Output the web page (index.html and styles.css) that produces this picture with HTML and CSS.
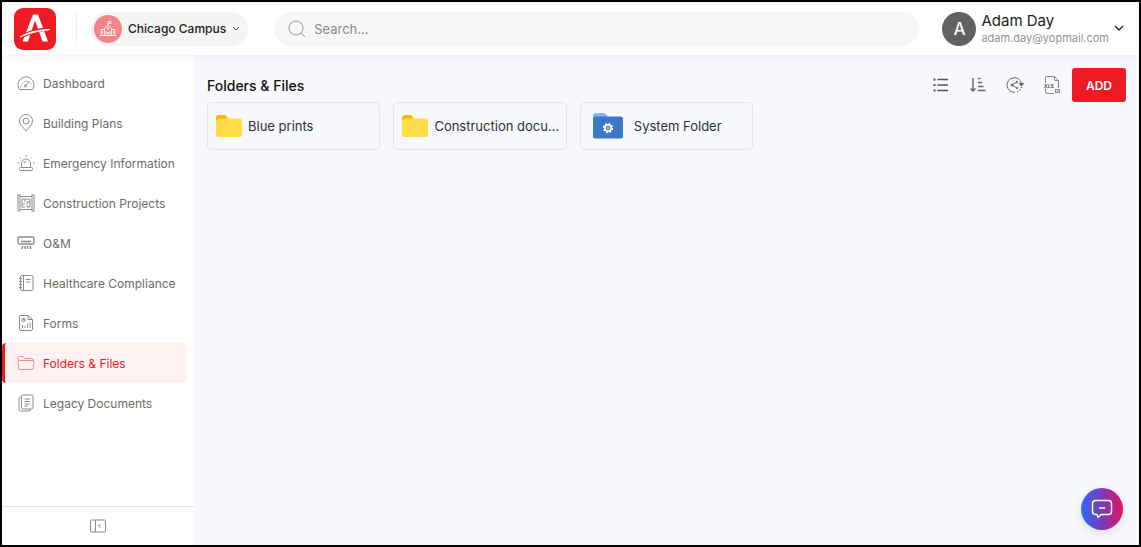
FILE: index.html
```html
<!DOCTYPE html>
<html lang="en">

<head>
    <meta charset="UTF-8">
    <meta name="viewport" content="width=device-width, initial-scale=1.0">
    <title>Folders &amp; Files</title>
    <link rel="stylesheet" href="styles.css">
</head>

<body>
    <header class="topbar">
        <a href="#" class="logo" aria-label="Home">
            <svg width="42" height="42" viewBox="0 0 42 42">
                <rect width="42" height="42" rx="9" fill="#ed1c24"/>
                <path d="M19 6.500h5L34 33.500h-5.500L21 12.500 14 33.500H8.500z" fill="#fff"/>
                <path d="M5.500 29.500C12 24 22 21 36.500 20.500 24 23 16 25 9 28.500z" fill="#fff" stroke="#ed1c24" stroke-width="2"/>
                <path d="M6 29C13 24.500 23 22 36 21.500 24 23 16 25 6 29z" fill="#fff" stroke="#fff"/>
            </svg>
        </a>

        <div class="campus">
            <button type="button" class="campus-button">
                <span class="campus-icon">
                    <svg width="18" height="18" viewBox="0 0 18 18" fill="none" stroke="#fff" stroke-width="0.800">
                        <path d="M9 5V1.500h3v2H9M5.500 15.500V8L9 5l3.500 3v7.500M5.500 9.500H2v6h14v-6h-3.500M1 15.500h16M8 15.500v-3h2v3M3.500 11v3M14.500 11v3M7 11v3M11 11v3"/>
                        <circle cx="9" cy="8.500" r="1"/>
                    </svg>
                </span>
                Chicago Campus
                <svg width="8" height="6" viewBox="0 0 8 6" fill="none" stroke="#444"><path d="M1 1l3 3 3-3"/></svg>
            </button>
        </div>

        <label class="search">
            <svg width="18" height="18" viewBox="0 0 18 18" fill="none" stroke="#999">
                <circle cx="8" cy="8" r="7"/>
                <path d="M13 13l4 4"/>
            </svg>
            <input type="text" placeholder="Search..." aria-label="Search">
        </label>

        <button type="button" class="user">
            <span class="avatar">A</span>
            <span class="user-details">
                <span class="user-name">Adam Day</span>
                <span class="user-email">adam.day@yopmail.com</span>
            </span>
            <svg width="10" height="7" viewBox="0 0 10 7" fill="none" stroke="#222" stroke-width="1.300"><path d="M1 1l4 4 4-4"/></svg>
        </button>
    </header>

    <div class="page">
        <aside class="sidebar">
            <nav class="menu">
                <a href="#" class="menu-item">
                    <svg viewBox="0 0 18 18">
                        <path d="M2.500 15.500A8 8 0 1 1 15.500 15.500z"/>
                        <path d="M4 12.500a5.500 5.500 0 0 1 10.500-2" stroke-dasharray="1.500 1"/>
                        <path d="M8.500 12L12 7.500"/>
                        <circle cx="8.500" cy="12" r="1"/>
                    </svg>
                    Dashboard
                </a>
                <a href="#" class="menu-item">
                    <svg viewBox="0 0 18 18">
                        <path d="M9 17C7 14 2.500 11 2.500 7a6.500 6.500 0 0 1 13 0c0 4-4.500 7-6.500 10z"/>
                        <circle cx="9" cy="7" r="3"/>
                    </svg>
                    Building Plans
                </a>
                <a href="#" class="menu-item">
                    <svg viewBox="0 0 18 18">
                        <path d="M4.500 13V9.500a4.500 4.500 0 0 1 9 0V13M7 9.500a2 2 0 0 1 2-2"/>
                        <rect x="2.500" y="13.500" width="13" height="3" rx="1"/>
                        <path d="M9 1v1.500M3 3.500l1 1M15 3.500l-1 1M0.500 9H2M16 9h1.500"/>
                    </svg>
                    Emergency Information
                </a>
                <a href="#" class="menu-item">
                    <svg viewBox="0 0 18 18">
                        <rect x="1" y="1" width="2" height="16"/>
                        <rect x="15" y="1" width="2" height="16"/>
                        <path d="M3 2.500h12M3 15.500h12M5 5h8v8h-3v-2M8 13H5V5M8 5v3M5 10h3M10 8h3M10 8v2"/>
                    </svg>
                    Construction Projects
                </a>
                <a href="#" class="menu-item">
                    <svg viewBox="0 0 18 18" class="thick">
                        <rect x="1" y="3" width="16" height="7" rx="1.500"/>
                        <path d="M4 7.500h10M6 12l-1.500 3M8 12v3M10.500 12v3M13 12l1 3"/>
                    </svg>
                    O&amp;M
                </a>
                <a href="#" class="menu-item">
                    <svg viewBox="0 0 18 18">
                        <rect x="3.500" y="1.500" width="12.500" height="15" rx="1.500"/>
                        <path d="M6.500 1.500v15M2 4.500h3M2 7.500h3M2 10.500h3M2 13.500h3M9 5.500h4.500M9 8h4.500"/>
                    </svg>
                    Healthcare Compliance
                </a>
                <a href="#" class="menu-item">
                    <svg viewBox="0 0 18 18">
                        <path d="M3.500 1.500H11l4.500 4V15q0 1.500-1.500 1.500H4Q2.500 16.500 2.500 15V3q0-1.500 1.500-1.500zM11 1.500v4h4.500"/>
                        <circle cx="6.500" cy="6" r="1.700"/>
                        <path d="M6.500 4.300V6h1.700M5.500 14v-3M8 14v-2M10.500 14V9.500M13 14V8.500"/>
                    </svg>
                    Forms
                </a>
                <a href="#" class="menu-item active" aria-current="page">
                    <svg viewBox="0 0 18 18">
                        <path d="M1 6.500V4Q1 2.500 2.500 2.500H6L8 4.500h6.500Q16 4.500 16 6.500"/>
                        <path d="M2 6.500h14q1 0 1 1l-.5 6.500q0 1.500-1.500 1.500H3q-1.500 0-1.500-1.500L1 7.500q0-1 1-1z"/>
                    </svg>
                    Folders &amp; Files
                </a>
                <a href="#" class="menu-item">
                    <svg viewBox="0 0 18 18">
                        <rect x="4.500" y="1" width="11.500" height="14" rx="1.500"/>
                        <path d="M4.500 3H3.500Q2 3 2 4.500V15.500Q2 17 3.500 17H12q1.500 0 1.500-2M7.500 5H13M7.500 7.500H13M7.500 10H13M7.500 12H11"/>
                    </svg>
                    Legacy Documents
                </a>
            </nav>
            <button type="button" class="collapse" aria-label="Collapse menu">
                <svg width="16" height="14" viewBox="0 0 16 14" fill="none" stroke="#888">
                    <rect x="0.500" y="1" width="15" height="12" rx="1"/>
                    <path d="M5.500 1v12M10.500 5L8.500 7l2 2"/>
                </svg>
            </button>
        </aside>

        <main class="content">
            <div class="content-header">
                <h1>Folders &amp; Files</h1>
                <div class="tools">
                    <button type="button" class="tool" aria-label="List view">
                        <svg width="18" height="18" viewBox="0 0 18 18" fill="none" stroke="#555" stroke-width="1.300">
                            <path d="M5.500 3.500H16M5.500 9H16M5.500 14.500H16"/>
                            <path d="M1.500 3.500h2M1.500 9h2M1.500 14.500h2" stroke-width="2.200"/>
                        </svg>
                    </button>
                    <button type="button" class="tool" aria-label="Sort">
                        <svg width="18" height="18" viewBox="0 0 18 18" fill="none" stroke="#666" stroke-width="1.400">
                            <path d="M4 2v13M1.500 12.500L4 15l2.500-2.500M9 2.500h2.500M9 6.500h4M9 10.500h5.500M9 14.500h7.500"/>
                        </svg>
                    </button>
                    <button type="button" class="tool" aria-label="Share">
                        <svg width="18" height="18" viewBox="0 0 18 18" fill="none" stroke="#666">
                            <path d="M15.500 7.500A7.300 7.300 0 1 0 9 16.300"/>
                            <path d="M11 16l1-.3M13.500 14.500l1-1M15.500 12l.3-1" stroke-width="1.300"/>
                            <path d="M13.500 7.500h4L15.500 10z" fill="#555"/>
                            <path d="M11 6L6 9l5 3"/>
                            <circle cx="6" cy="9" r="1" fill="#666"/>
                            <circle cx="11" cy="6" r="0.700" fill="#666"/>
                            <circle cx="11" cy="12" r="0.700" fill="#666"/>
                        </svg>
                    </button>
                    <button type="button" class="tool" aria-label="Export XLS">
                        <svg width="18" height="18" viewBox="0 0 18 18" fill="none" stroke="#888">
                            <path d="M2.500 7V2Q2.500.5 4 .5h7.500l4 4V12M11.500.5v4h4M2.500 13v3q0 1.500 1.500 1.500h7"/>
                            <rect x="12.500" y="13.500" width="4" height="3"/>
                            <path d="M13.500 15h2"/>
                            <text x="1" y="12" class="xls">XLS</text>
                        </svg>
                    </button>
                    <button type="button" class="add-button">ADD</button>
                </div>
            </div>

            <div class="folders">
                <a href="#" class="folder">
                    <svg width="26" height="22" viewBox="0 0 26 22">
                        <path d="M0 8V3Q0 0 3 0h5q2 0 3 2l1 2v4z" fill="#ffb30f"/>
                        <rect y="3.500" width="26" height="18.500" rx="2.500" fill="#ffdc48"/>
                        <path d="M0 7V3.500h5Q1 3.500 0 7z" fill="#ffb30f"/>
                    </svg>
                    <span>Blue prints</span>
                </a>
                <a href="#" class="folder">
                    <svg width="26" height="22" viewBox="0 0 26 22">
                        <path d="M0 8V3Q0 0 3 0h5q2 0 3 2l1 2v4z" fill="#ffb30f"/>
                        <rect y="3.500" width="26" height="18.500" rx="2.500" fill="#ffdc48"/>
                        <path d="M0 7V3.500h5Q1 3.500 0 7z" fill="#ffb30f"/>
                    </svg>
                    <span>Construction docu...</span>
                </a>
                <a href="#" class="folder system">
                    <svg width="30" height="26" viewBox="0 0 30 26">
                        <path d="M0 8V3Q0 0 3 0h7q2 0 3.500 2l2 2v4z" fill="#82b4f8"/>
                        <rect y="3.500" width="30" height="22" rx="2.500" fill="#3c78c8"/>
                        <circle cx="15" cy="15" r="4.500" fill="none" stroke="#fff" stroke-width="1.500" stroke-dasharray="1.800 1.730"/>
                        <circle cx="15" cy="15" r="3.200" fill="none" stroke="#fff" stroke-width="1.800"/>
                        <circle cx="15" cy="15" r="1" fill="#d6e4f7"/>
                    </svg>
                    <span>System Folder</span>
                </a>
            </div>
        </main>
    </div>

    <button type="button" class="chat-button" aria-label="Chat">
        <svg width="22" height="20" viewBox="0 0 22 20" fill="none" stroke="#fff" stroke-width="1.500" stroke-linejoin="round" stroke-linecap="round">
            <path d="M4.500 1.500h13q3 0 3 3v8q0 3-3 3H10l-3 3-1-3H4.500q-3 0-3-3v-8q0-3 3-3zM8.500 9h5"/>
        </svg>
    </button>
</body>
</html>
```

FILE: styles.css
```css
* {
    box-sizing: border-box;
}

body {
    font-family: Inter, sans-serif;
    margin: 0;
    height: 100vh;
    display: flex;
    flex-direction: column;
    border: 2px solid #000;
    background-color: #f8f9fd;
    color: #222;
}

button {
    font-family: inherit;
    border: none;
    padding: 0;
    background: none;
    color: inherit;
    cursor: pointer;
}

a {
    color: inherit;
    text-decoration: none;
}

svg {
    flex-shrink: 0;
}

.topbar {
    display: flex;
    align-items: center;
    height: 53px;
    padding: 0 15px 0 12px;
    background-color: #fff;
    box-shadow: 0 2px 8px rgba(0, 0, 0, 0.06);
    z-index: 1;
}

.logo {
    height: 42px;
}

.campus {
    margin-left: 20px;
    padding-left: 14px;
    border-left: 1px solid #eee;
}

.campus-button {
    display: flex;
    align-items: center;
    gap: 6px;
    height: 34px;
    padding: 0 8px 0 3px;
    border-radius: 17px;
    background-color: #f4f4f4;
    font-size: 12px;
    font-weight: 500;
}

.campus-icon {
    display: flex;
    align-items: center;
    justify-content: center;
    width: 28px;
    height: 28px;
    border-radius: 50%;
    background-color: #f28588;
}

.search {
    flex: 1;
    display: flex;
    align-items: center;
    gap: 8px;
    height: 34px;
    margin: 0 23px 0 26px;
    padding: 0 14px;
    border-radius: 17px;
    background-color: #f7f7f7;
}

.search input {
    flex: 1;
    min-width: 0;
    padding: 0;
    border: none;
    outline: none;
    background: none;
    font-family: inherit;
    font-size: 13px;
}

.search input::placeholder {
    color: #888;
}

.user {
    display: flex;
    align-items: center;
    gap: 5px;
    text-align: left;
}

.avatar {
    display: flex;
    align-items: center;
    justify-content: center;
    width: 34px;
    height: 34px;
    border-radius: 50%;
    background-color: #616161;
    color: #fff;
    font-size: 17px;
    font-weight: 500;
}

.user-details {
    display: flex;
    flex-direction: column;
}

.user-name {
    font-size: 15px;
    line-height: 18px;
}

.user-email {
    color: #929292;
    font-size: 11px;
    line-height: 16px;
}

.page {
    flex: 1;
    display: flex;
    min-height: 0;
}

.sidebar {
    display: flex;
    flex-direction: column;
    width: 192px;
    background-color: #fff;
}

.menu {
    flex: 1;
    padding: 8px 7px 0 0;
}

.menu-item {
    display: flex;
    align-items: center;
    gap: 8px;
    height: 40px;
    padding-left: 12px;
    border-left: 3px solid transparent;
    color: #6c6c6c;
    font-size: 12px;
    white-space: nowrap;
}

.menu-item svg {
    width: 18px;
    height: 18px;
    fill: none;
    stroke: #8c8c8c;
}

.menu-item .thick {
    stroke-width: 1.4;
}

.menu-item.active {
    border-left-color: #ed1c24;
    border-radius: 4px;
    background-color: #fef1f2;
    color: #ed1c24;
}

.menu-item.active svg {
    stroke: #f78b90;
}

.collapse {
    display: flex;
    align-items: center;
    justify-content: center;
    height: 39px;
    border-top: 1px solid #e5e5e5;
}

.content {
    flex: 1;
    padding: 13px 13px 0;
}

.content-header {
    display: flex;
    align-items: center;
    justify-content: space-between;
}

.content-header h1 {
    margin: 0;
    color: #111;
    font-size: 14px;
    font-weight: 500;
}

.tools {
    display: flex;
    align-items: center;
    gap: 19px;
}

.tool {
    display: flex;
}

.xls {
    fill: #555;
    stroke: none;
    font-size: 5px;
    font-weight: 700;
}

.add-button {
    width: 54px;
    height: 34px;
    margin-left: -8px;
    border-radius: 3px;
    background-color: #ed1c24;
    color: #fff;
    font-size: 12px;
    font-weight: 600;
}

.folders {
    display: grid;
    grid-template-columns: repeat(5, minmax(0, 1fr));
    gap: 13px;
}

.folder {
    display: flex;
    align-items: center;
    gap: 6px;
    height: 48px;
    padding: 0 4px 0 8px;
    border: 1px solid #e5e5e8;
    border-radius: 5px;
    color: #2c2f38;
    font-size: 13px;
}

.folder span {
    overflow: hidden;
    text-overflow: ellipsis;
    white-space: nowrap;
}

.folder.system {
    gap: 11px;
    padding-left: 12px;
}

.chat-button {
    position: fixed;
    right: 18px;
    bottom: 17px;
    display: flex;
    align-items: center;
    justify-content: center;
    width: 42px;
    height: 42px;
    border-radius: 50%;
    background: linear-gradient(90deg, #2b6cf6, #7a3bbd 50%, #e4125f);
    box-shadow: 0 3px 10px rgba(0, 0, 0, 0.12);
}
```
